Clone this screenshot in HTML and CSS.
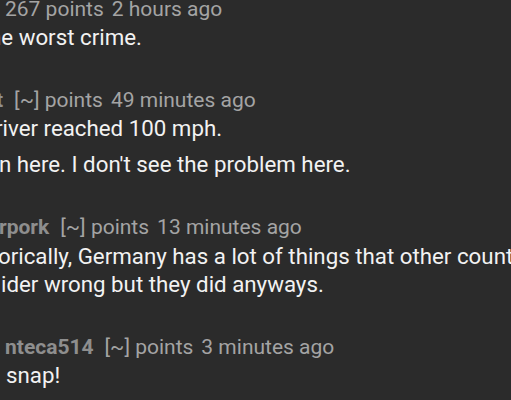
FILE: index.html
```html
<!DOCTYPE html>
<html>
<head>
    <title>Comments</title>
    <link rel="stylesheet" href="styles.css">
</head>
<body>
    <section class="thread">
        <div class="comment">
            <div class="meta lead-score">
                <span class="score">267 points</span>
                <span class="age">2 hours ago</span>
            </div>
            <p class="text cut-h">he worst crime.</p>
        </div>

        <div class="comment">
            <div class="meta cut-t">
                <span class="author">t</span>
                <span class="score">[~] points</span>
                <span class="age">49 minutes ago</span>
            </div>
            <p class="text cut-r">river reached 100 mph.</p>
            <p class="text cut-n">n here. I don't see the problem here.</p>
        </div>

        <div class="comment">
            <div class="meta cut-author">
                <span class="author">rpork</span>
                <span class="score">[~] points</span>
                <span class="age">13 minutes ago</span>
            </div>
            <p class="text cut-o">orically, Germany has a lot of things that other countries<br><span class="cut-i">ider wrong but they did anyways.</span></p>
        </div>

        <div class="comment">
            <div class="meta cut-a">
                <span class="author">nteca514</span>
                <span class="score">[~] points</span>
                <span class="age">3 minutes ago</span>
            </div>
            <p class="text lead-word">snap!</p>
        </div>
    </section>
</body>
</html>
```

FILE: styles.css
```css
/* General Styles */
html, body {
    margin: 0;
    padding: 0;
    background-color: #2b2b2b;
    overflow: hidden;
}

body {
    font-family: Roboto, 'Noto Sans', Arial, sans-serif;
    width: 511px;
    height: 400px;
}

/* Thread */
.thread {
    margin-top: -6px;
    white-space: nowrap;
}

.comment {
    margin-bottom: 34px;
}

.meta {
    display: flex;
    gap: 8px;
    font-size: 21px;
    line-height: 30px;
    color: #a4a4a4;
}

.meta .author {
    font-weight: bold;
    color: #8e8e8e;
    margin-right: 3px;
}

.text {
    margin: 0;
    font-size: 22.3px;
    line-height: 27px;
    color: #f2f2f2;
}

.text + .text {
    margin-top: 9px;
}

/* Left-cropped starts */
.lead-score {
    padding-left: 5px;
}

.cut-h {
    margin-left: -11px;
}

.cut-t {
    margin-left: -4px;
}

.cut-r {
    margin-left: -5px;
}

.cut-n {
    margin-left: -1px;
}

.cut-author {
    margin-left: -1px;
}

.cut-o {
    margin-left: -2px;
    line-height: 28px;
}

.cut-i {
    margin-left: 3px;
}

.cut-a {
    padding-left: 5px;
}

.lead-word {
    padding-left: 6px;
}
```
